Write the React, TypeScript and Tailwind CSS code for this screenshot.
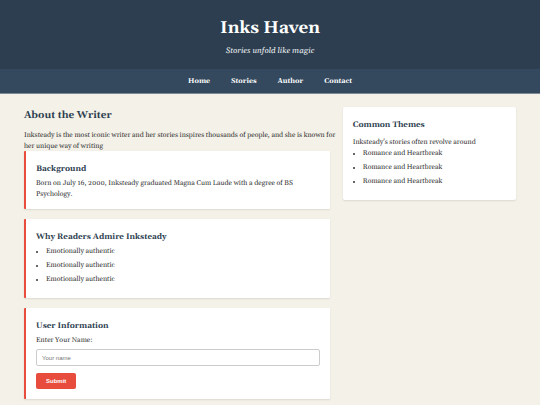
import React from "react";

const links = ["Home", "Stories", "Author", "Contact"];

const reasons = [
  "Emotionally authentic",
  "Emotionally authentic",
  "Emotionally authentic",
];

const themes = [
  "Romance and Heartbreak",
  "Romance and Heartbreak",
  "Romance and Heartbreak",
];

const Card = ({
  title,
  children,
}: {
  title: string;
  children: React.ReactNode;
}) => {
  return (
    <section className="mb-[10px] rounded-[1px] border-l-2 border-[#e74c3c] bg-white px-[10px] pt-3 pb-2 shadow-[0_1px_2px_rgba(0,0,0,0.1)]">
      <h3 className="mb-1 text-[8px] leading-3 font-bold text-[#2c3e50]">
        {title}
      </h3>
      {children}
    </section>
  );
};

const List = ({ items }: { items: string[] }) => {
  return (
    <ul className="mb-1 list-inside list-disc space-y-[3px]">
      {items.map((item, index) => (
        <li key={index}>{item}</li>
      ))}
    </ul>
  );
};

export default function App() {
  return (
    <div className="min-h-screen bg-[#f4f1e8] font-[Georgia,Gelasio,'Liberation_Serif',serif] text-[7px] leading-[11px] text-[#333333] [text-rendering:geometricPrecision]">
      <header className="bg-[#2c3e50] pt-4 pb-3 text-center text-white">
        <h1 className="text-[17px] leading-6 font-bold">Inks Haven</h1>
        <p className="mt-[5px] text-[8px] leading-3 italic text-[#ecf0f1]">
          Stories unfold like magic
        </p>
      </header>

      <nav className="flex justify-center gap-[21px] border-b border-[#7b8a96] bg-[#34495e] pt-2 pb-[5px] font-bold text-white">
        {links.map((link) => (
          <a key={link} href="#">
            {link}
          </a>
        ))}
      </nav>

      <div className="grid grid-cols-[307fr_174fr] items-start gap-[13px] px-6 pt-[13px]">
        <main>
          <h2 className="mb-[6px] text-[10px] leading-[18px] font-bold text-[#2c3e50]">
            About the Writer
          </h2>
          <p className="-mr-[10px] -mb-[2px]">
            Inksteady is the most iconic writer and her stories inspires
            thousands of people, and she is known for her unique way of writing
          </p>

          <Card title="Background">
            <p>
              Born on July 16, 2000, Inksteady graduated Magna Cum Laude with a
              degree of BS Psychology.
            </p>
          </Card>

          <Card title="Why Readers Admire Inksteady">
            <List items={reasons} />
          </Card>

          <Card title="User Information">
            <form>
              <label htmlFor="name" className="block">
                Enter Your Name:
              </label>
              <input
                id="name"
                type="text"
                placeholder="Your name"
                className="mt-[2px] block h-[17px] w-full rounded-[2px] border border-[#cccccc] px-[5px] font-['Liberation_Sans',sans-serif] text-[6px] placeholder:text-[#757575]"
              />
              <button
                type="button"
                className="mt-[7px] mb-[2px] block h-4 rounded-[2px] bg-[#e74c3c] px-[10px] font-['Liberation_Sans',sans-serif] text-[6px] font-bold text-white"
              >
                Submit
              </button>
            </form>
          </Card>
        </main>

        <aside className="rounded-[2px] bg-white px-[10px] pt-3 pb-2 shadow-[0_1px_2px_rgba(0,0,0,0.1)]">
          <h3 className="mb-[7px] text-[8px] leading-3 font-bold text-[#2c3e50]">
            Common Themes
          </h3>
          <p>Inksteady's stories often revolve around</p>
          <List items={themes} />
        </aside>
      </div>
    </div>
  );
}
